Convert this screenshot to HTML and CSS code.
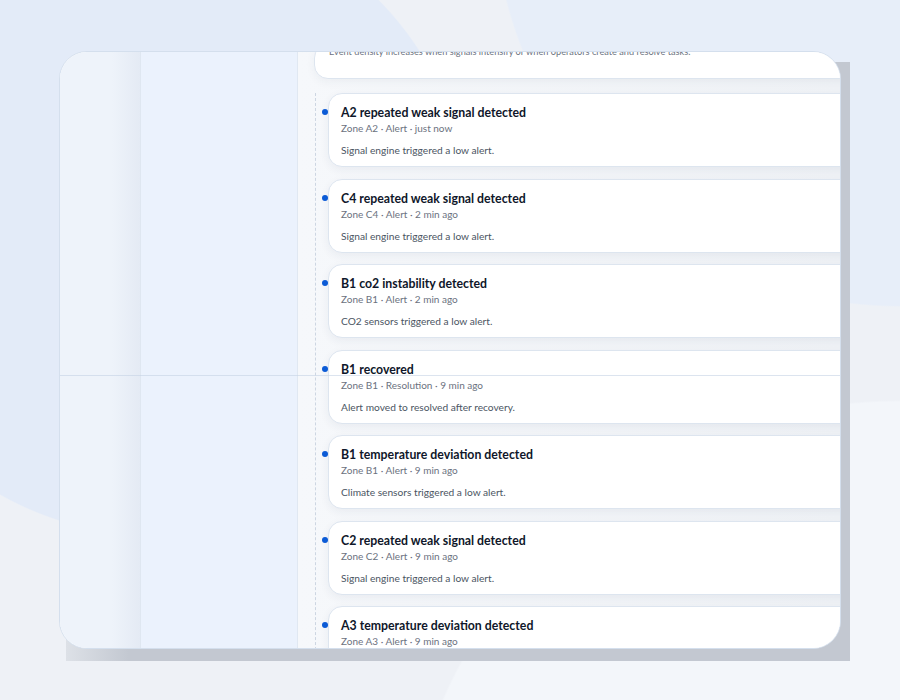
FILE: index.html
```html
<!DOCTYPE html>
<html>
<head>
    <meta charset="utf-8">
    <title>Event timeline</title>
    <link rel="stylesheet" href="styles.css">
</head>
<body>
    <div class="stage">
        <div class="frame">
            <aside class="rail"></aside>
            <div class="panel"></div>
            <main class="feed">
                <div class="summary">
                    <p>Event density increases when signals intensify or when operators create and resolve tasks.</p>
                </div>
                <div class="timeline">
                    <div class="event">
                        <h3>A2 repeated weak signal detected</h3>
                        <p class="meta">Zone A2 · Alert · just now</p>
                        <p class="desc">Signal engine triggered a low alert.</p>
                    </div>
                    <div class="event">
                        <h3>C4 repeated weak signal detected</h3>
                        <p class="meta">Zone C4 · Alert · 2 min ago</p>
                        <p class="desc">Signal engine triggered a low alert.</p>
                    </div>
                    <div class="event">
                        <h3>B1 co2 instability detected</h3>
                        <p class="meta">Zone B1 · Alert · 2 min ago</p>
                        <p class="desc">CO2 sensors triggered a low alert.</p>
                    </div>
                    <div class="event">
                        <h3>B1 recovered</h3>
                        <p class="meta">Zone B1 · Resolution · 9 min ago</p>
                        <p class="desc">Alert moved to resolved after recovery.</p>
                    </div>
                    <div class="event">
                        <h3>B1 temperature deviation detected</h3>
                        <p class="meta">Zone B1 · Alert · 9 min ago</p>
                        <p class="desc">Climate sensors triggered a low alert.</p>
                    </div>
                    <div class="event">
                        <h3>C2 repeated weak signal detected</h3>
                        <p class="meta">Zone C2 · Alert · 9 min ago</p>
                        <p class="desc">Signal engine triggered a low alert.</p>
                    </div>
                    <div class="event">
                        <h3>A3 temperature deviation detected</h3>
                        <p class="meta">Zone A3 · Alert · 9 min ago</p>
                        <p class="desc">Climate sensors triggered a low alert.</p>
                    </div>
                </div>
            </main>
            <div class="seam"></div>
        </div>
    </div>
</body>
</html>
```

FILE: styles.css
```css
* {
    margin: 0;
    padding: 0;
    box-sizing: border-box;
}
body {
    width: 900px;
    height: 700px;
    overflow: hidden;
    font-family: Lato, "Noto Sans", sans-serif;
    background:
        radial-gradient(circle 315px at 155px 221px, #e3ebf8 99.6%, transparent 100%),
        radial-gradient(circle 407px at 900px -100px, #e7eef9 99.6%, transparent 100%),
        radial-gradient(circle 500px at 900px 900px, #f3f6fa 99.6%, transparent 100%),
        #eef1f6;
}
.stage {
    padding: 51px 59px;
}
.frame {
    position: relative;
    width: 782px;
    height: 598px;
    display: grid;
    grid-template-columns: 81px 157px 1fr;
    border: 1px solid #d4dfed;
    border-radius: 28px;
    background: #fff;
}
.frame::before {
    content: "";
    position: absolute;
    left: 6px;
    top: 10px;
    right: -10px;
    bottom: -13px;
    z-index: -1;
    background: linear-gradient(to right, #dde1e7, #c3c8d1 8%, #c3c8d1);
}
.rail {
    border-radius: 27px 0 0 27px;
    background: linear-gradient(to right, #eef3fa 65%, #e4eaf4);
    border-right: 1px solid #dfe7f1;
}
.panel {
    background: #ebf2fd;
    border-right: 1px solid #e0e8f2;
}
.feed {
    overflow: hidden;
    border-radius: 0 27px 27px 0;
    padding-left: 16px;
    background: linear-gradient(to right, #f6f8fb, #eff2f6);
}
.summary {
    margin: -8px -40px 0 0;
    padding: 0 14px 19px;
    background: #fff;
    border: 1px solid #dde5ef;
    border-radius: 14px;
    box-shadow: 0 3px 10px rgba(30, 50, 80, 0.05);
}
.summary p {
    font-size: 9.2px;
    line-height: 14px;
    color: #6b7280;
}
.timeline {
    margin: 14px -40px 0 1px;
    padding-left: 12px;
    border-left: 1px dashed #cdd6e2;
}
.event {
    position: relative;
    height: 74px;
    margin-bottom: 11.5px;
    padding: 11px 11px 0 12px;
    background: #fff;
    border: 1px solid #dde5ef;
    border-radius: 14px;
    box-shadow: 0 3px 10px rgba(30, 50, 80, 0.06);
}
.event::before {
    content: "";
    position: absolute;
    left: -7px;
    top: 15px;
    width: 6px;
    height: 6px;
    border-radius: 50%;
    background: #0b5bd6;
}
.event h3 {
    font-size: 12.3px;
    line-height: 16px;
    font-weight: 700;
    color: #0f172a;
}
.meta {
    font-size: 10px;
    line-height: 14px;
    color: #6b7280;
}
.desc {
    margin-top: 8px;
    font-size: 10.2px;
    line-height: 14px;
    color: #4b5563;
}
.seam {
    position: absolute;
    left: 0;
    right: 0;
    top: 323px;
    height: 1px;
    background: rgba(196, 210, 228, 0.6);
}
```
